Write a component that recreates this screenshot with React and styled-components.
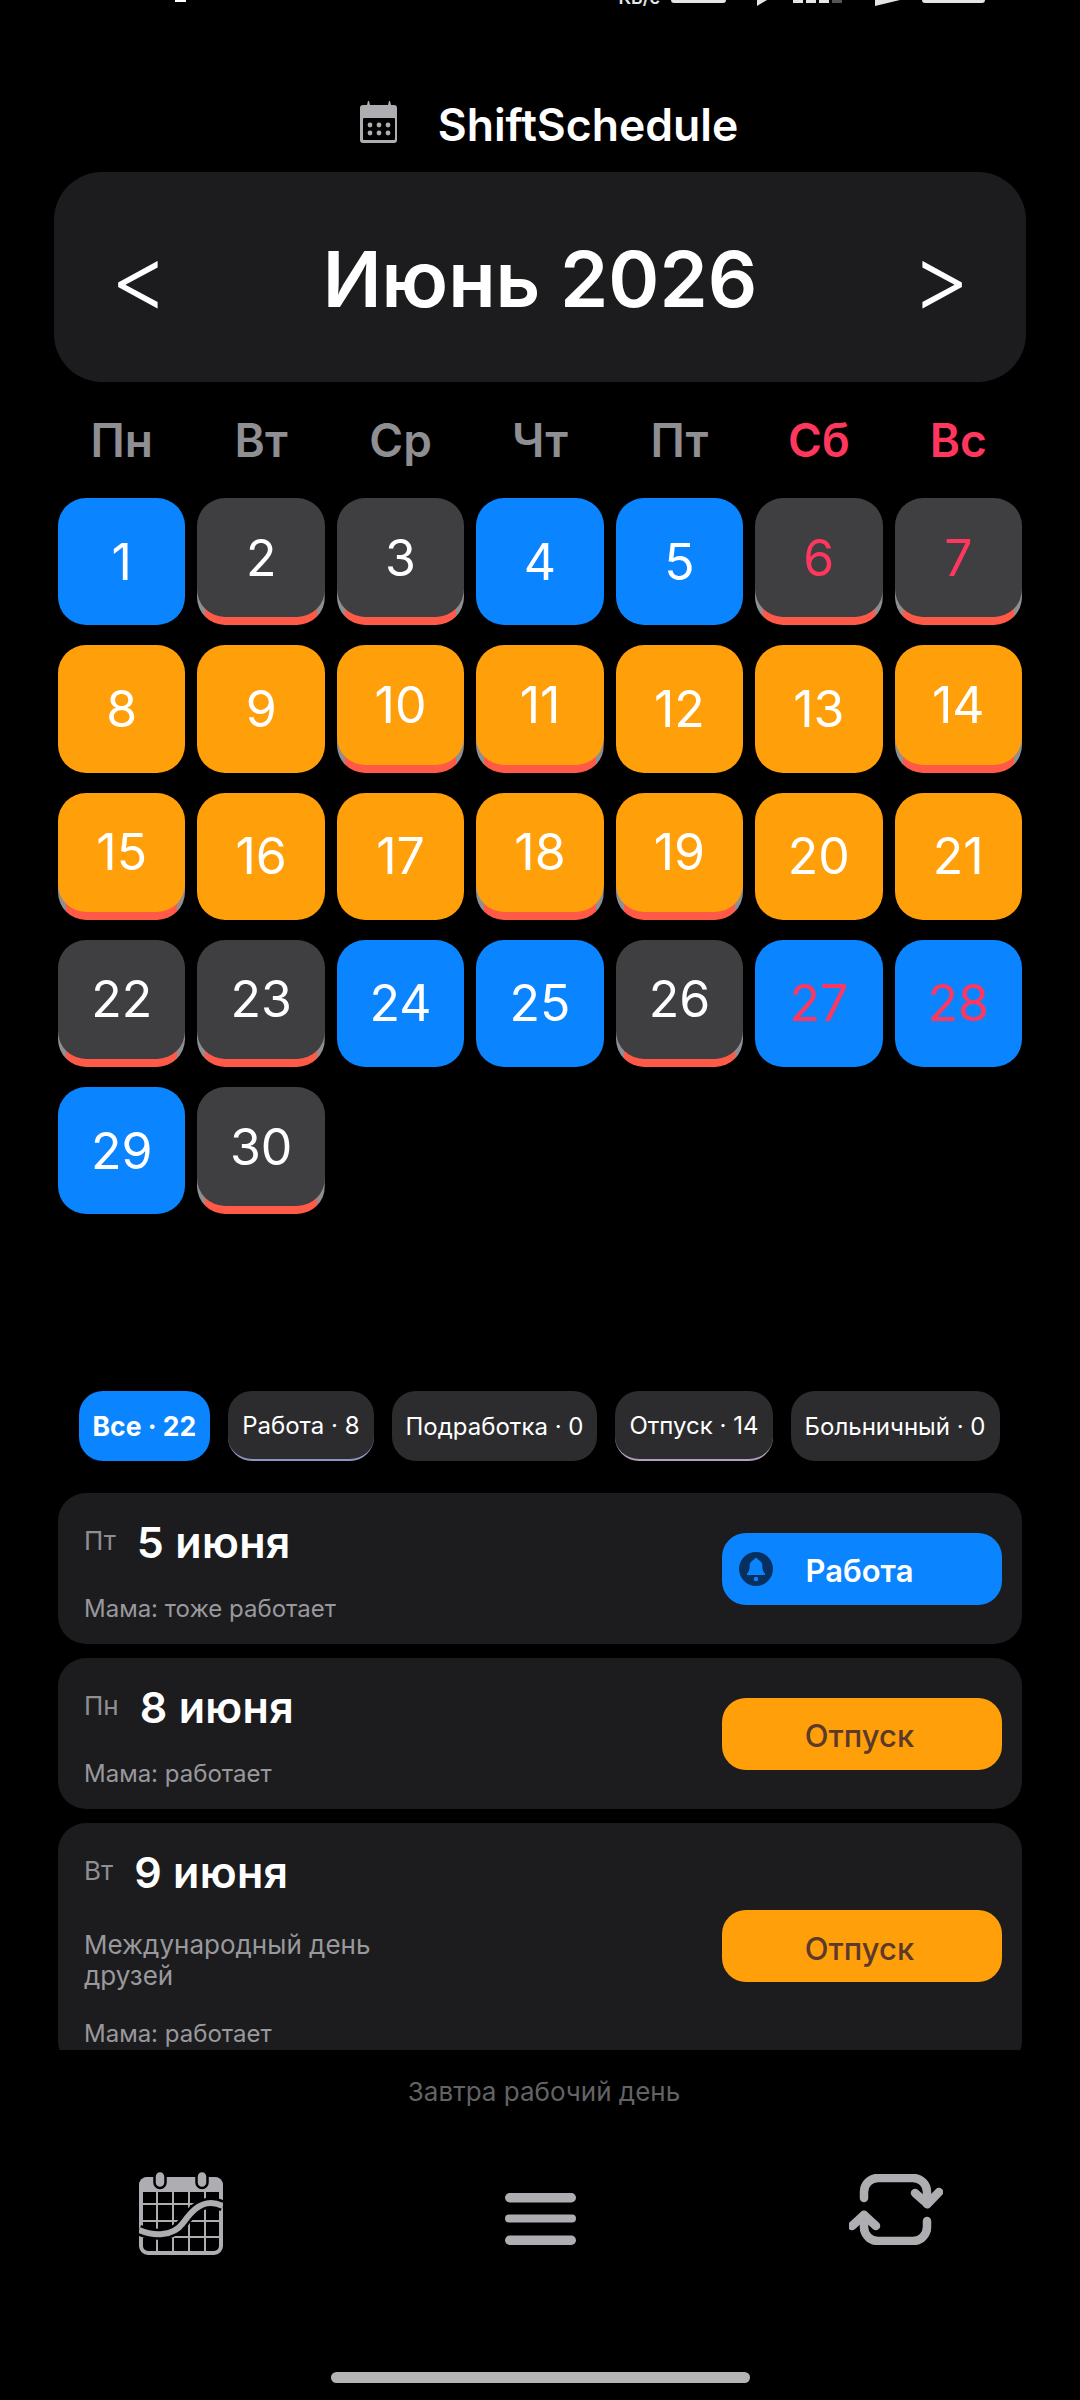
import styled, { createGlobalStyle } from "styled-components";

const GlobalStyle = createGlobalStyle`
  html, body {
    margin: 0;
    padding: 0;
    background: #000;
  }
  * {
    box-sizing: border-box;
  }
`;

const BLUE = "#0a84ff";
const ORANGE = "#ff9f0a";
const DARK = "#3f3e40";
const GRAY = "#aeaeb2";
const PINK = "#ff375f";

// w = работа, o = отпуск, d = выходной; второй элемент - полоска снизу, третий - красная цифра
const days = [
  ["w"], ["d", 1], ["d", 1], ["w"], ["w"], ["d", 1, 1], ["d", 1, 1],
  ["o"], ["o"], ["o", 1], ["o", 1], ["o"], ["o"], ["o", 1],
  ["o", 1], ["o"], ["o"], ["o", 1], ["o", 1], ["o"], ["o"],
  ["d", 1], ["d", 1], ["w"], ["w"], ["d", 1], ["w", 0, 1], ["w", 0, 1],
  ["w"], ["d", 1],
];

const faceColors = { w: BLUE, o: ORANGE, d: DARK };

const weekNames = ["Пн", "Вт", "Ср", "Чт", "Пт", "Сб", "Вс"];

const filters = [
  { label: "Все · 22", active: true },
  { label: "Работа · 8", line: "#8f92c4" },
  { label: "Подработка · 0" },
  { label: "Отпуск · 14", line: "#b39ebd" },
  { label: "Больничный · 0" },
];

export default function App() {
  return (
    <Page>
      <GlobalStyle />
      <StatusBar>
        <StatusDot />
        <StatusRight>
          <Speed>КБ/с</Speed>
          <StatusPill $w={55} $ml={11} />
          <StatusTip $w={10} $ml={31} />
          <Signal>
            <SignalBar $on />
            <SignalBar $on />
            <SignalBar $on />
            <SignalBar />
          </Signal>
          <StatusTip $w={25} $ml={33} />
          <StatusPill $w={63} $ml={22} />
        </StatusRight>
      </StatusBar>

      <TitleRow>
        <svg width="38" height="42" viewBox="0 0 38 42">
          <path d="M8 0h1l1 4h18l1-4h1l1 4h3a3 3 0 0 1 3 3v32a3 3 0 0 1-3 3H3a3 3 0 0 1-3-3V7a3 3 0 0 1 3-3h4z" fill={GRAY} />
          <rect x="3" y="17" width="32" height="22" rx="1" fill="#000" />
          {[10, 19, 28].map(x => (
            <g key={x} fill={GRAY}>
              <circle cx={x} cy="24" r="2.4" />
              <circle cx={x} cy="32" r="2.4" />
            </g>
          ))}
        </svg>
        <AppName>ShiftSchedule</AppName>
      </TitleRow>

      <MonthCard>
        <MonthArrow>&lt;</MonthArrow>
        <MonthName>Июнь 2026</MonthName>
        <MonthArrow>&gt;</MonthArrow>
      </MonthCard>

      <WeekRow>
        {weekNames.map((name, i) => (
          <WeekName key={name} $weekend={i > 4}>{name}</WeekName>
        ))}
      </WeekRow>

      <CalendarGrid>
        {days.map(([type, marked, red], i) => (
          <DayCell key={i} $marked={marked}>
            <DayFace $color={faceColors[type]} $marked={marked} $red={red}>
              {i + 1}
            </DayFace>
          </DayCell>
        ))}
      </CalendarGrid>

      <FilterRow>
        {filters.map(f => (
          <FilterChip key={f.label} $active={f.active} $line={f.line}>{f.label}</FilterChip>
        ))}
      </FilterRow>

      <ShiftList>
        <ShiftCard>
          <ShiftInfo>
            <DateLine>
              <WeekDay>Пт</WeekDay>
              <DateText>5 июня</DateText>
            </DateLine>
            <Note>Мама: тоже работает</Note>
          </ShiftInfo>
          <ShiftButton $work>
            <BellBadge>
              <svg width="34" height="34" viewBox="0 0 34 34">
                <circle cx="17" cy="17" r="17" fill="#08305f" />
                <path d="M17 6c1.2 0 2 .8 2 1.8 3 .9 4.400 3.500 4.400 6.700 0 3.500.8 5.200 2.600 7v1.500H8v-1.500c1.800-1.800 2.600-3.500 2.600-7 0-3.200 1.400-5.800 4.400-6.700C15 6.800 15.800 6 17 6z" fill={BLUE} />
                <circle cx="17" cy="27" r="2.200" fill={BLUE} />
              </svg>
            </BellBadge>
            Работа
          </ShiftButton>
        </ShiftCard>

        <ShiftCard>
          <ShiftInfo>
            <DateLine>
              <WeekDay>Пн</WeekDay>
              <DateText>8 июня</DateText>
            </DateLine>
            <Note>Мама: работает</Note>
          </ShiftInfo>
          <ShiftButton>Отпуск</ShiftButton>
        </ShiftCard>

        <ShiftCard $tall>
          <ShiftInfo>
            <DateLine>
              <WeekDay>Вт</WeekDay>
              <DateText>9 июня</DateText>
            </DateLine>
            <Holiday>Международный день<br />друзей</Holiday>
            <Note>Мама: работает</Note>
          </ShiftInfo>
          <ShiftButton>Отпуск</ShiftButton>
        </ShiftCard>
      </ShiftList>

      <Hint>Завтра рабочий день</Hint>

      <BottomNav>
        <NavIcon>
          <svg width="84" height="84" viewBox="0 0 84 84">
            <rect x="2" y="8" width="80" height="74" rx="7" fill="none" stroke={GRAY} strokeWidth="4" />
            <path d="M8 6h68a8 8 0 0 1 8 8v7H0v-7a8 8 0 0 1 8-8z" fill={GRAY} />
            <g stroke={GRAY} strokeWidth="2">
              {[18, 34, 50, 66].map(x => <path key={x} d={`M${x} 21V82`} />)}
              {[33, 50, 66].map(y => <path key={y} d={`M2 ${y}H82`} />)}
            </g>
            <g fill={GRAY} stroke="#000" strokeWidth="2.500">
              <rect x="15.500" y="0" width="11" height="17" rx="5.500" />
              <rect x="57.500" y="0" width="11" height="17" rx="5.500" />
            </g>
            <path d="M0 59C14 65 34 66 44 52C52 41 60 32 72 32C76 32 80 33 84 35" fill="none" stroke="#000" strokeWidth="11" />
            <path d="M0 59C14 65 34 66 44 52C52 41 60 32 72 32C76 32 80 33 84 35" fill="none" stroke={GRAY} strokeWidth="6" />
          </svg>
        </NavIcon>

        <NavIcon $top={22} $left={9}>
          <svg width="71" height="52" viewBox="0 0 71 52">
            <rect x="0" y="0" width="71" height="9.500" rx="4.700" fill={GRAY} />
            <rect x="0" y="21.500" width="71" height="8" rx="4" fill={GRAY} />
            <rect x="0" y="42.500" width="71" height="9.500" rx="4.700" fill={GRAY} />
          </svg>
        </NavIcon>

        <NavIcon $top={3}>
          <svg width="94" height="71" viewBox="0 0 94 71">
            <g fill="none" stroke={GRAY} strokeWidth="8.500" strokeLinecap="round" strokeLinejoin="round">
              <path d="M15 24V18A14 14 0 0 1 29 4H64A14 14 0 0 1 78 18V30" />
              <path d="M66 19L78.500 30L90 18" />
              <path d="M78 47V53A14 14 0 0 1 64 67H29A14 14 0 0 1 15 53V41" />
              <path d="M3 52L15 41L27 52" />
            </g>
          </svg>
        </NavIcon>
      </BottomNav>

      <HomeBar />
    </Page>
  );
}

const Page = styled.div`
  width: 1080px;
  height: 2400px;
  background: #000;
  color: #fff;
  font-family: Inter, "Noto Sans", sans-serif;
  display: flex;
  flex-direction: column;
  overflow: hidden;
`;

const StatusBar = styled.div`
  height: 6px;
  display: flex;
  justify-content: space-between;
  align-items: flex-start;
  padding: 0 95px 0 175px;
  overflow: hidden;
`;

const StatusDot = styled.div`
  width: 11px;
  height: 2px;
  background: #fff;
`;

const StatusRight = styled.div`
  display: flex;
  align-items: flex-start;
`;

const Speed = styled.span`
  font-size: 18px;
  line-height: 22px;
  font-weight: 600;
  color: #e5e5e5;
  margin-top: -13px;
`;

const StatusPill = styled.div`
  width: ${p => p.$w}px;
  height: 3px;
  margin-left: ${p => p.$ml}px;
  background: #e5e5e5;
  border-radius: 0 0 4px 4px;
`;

const StatusTip = styled.div`
  width: ${p => p.$w}px;
  height: 6px;
  margin-left: ${p => p.$ml}px;
  background: #e5e5e5;
  clip-path: polygon(0 0, 100% 0, 0 100%);
`;

const Signal = styled.div`
  display: flex;
  gap: 3px;
  margin-left: 26px;
`;

const SignalBar = styled.div`
  width: 10px;
  height: 3px;
  background: ${p => (p.$on ? "#e5e5e5" : "#555")};
`;

const TitleRow = styled.div`
  height: 42px;
  margin-top: 95px;
  display: flex;
  align-items: center;
  justify-content: center;
  gap: 40px;
  padding-left: 18px;
`;

const AppName = styled.h1`
  margin: 5px 0 0;
  font-size: 44.500px;
  line-height: 48px;
  font-weight: 600;
`;

const MonthCard = styled.div`
  margin: 29px 54px 0;
  height: 210px;
  background: #1c1c1e;
  border-radius: 48px;
  display: flex;
  align-items: center;
  justify-content: space-between;
  padding: 0 56px;
`;

const MonthArrow = styled.span`
  font-size: 90px;
  line-height: 90px;
  font-weight: 300;
  margin-top: 2px;
`;

const MonthName = styled.h2`
  margin: 3px 0 0;
  font-size: 77.500px;
  line-height: 90px;
  font-weight: 600;
`;

const WeekRow = styled.div`
  margin: 0 58px;
  height: 116px;
  display: grid;
  grid-template-columns: repeat(7, 1fr);
  gap: 12px;
  align-items: center;
`;

const WeekName = styled.div`
  text-align: center;
  font-size: 46px;
  line-height: 54px;
  font-weight: 600;
  color: ${p => (p.$weekend ? PINK : "#8e8e93")};
`;

const CalendarGrid = styled.div`
  margin: 0 58px;
  display: grid;
  grid-template-columns: repeat(7, 1fr);
  grid-auto-rows: 127.250px;
  column-gap: 12px;
  row-gap: 20px;
`;

const DayCell = styled.div`
  border-radius: 28px;
  background: ${p =>
    p.$marked
      ? "linear-gradient(to right, #8e8e93 8px, #ff5a47 8px, #ff5a47 calc(100% - 8px), #8e8e93 calc(100% - 8px)) bottom / 100% 40px no-repeat"
      : "none"};
`;

const DayFace = styled.div`
  height: ${p => (p.$marked ? "calc(100% - 8px)" : "100%")};
  border-radius: 28px;
  background: ${p => p.$color};
  color: ${p => (p.$red ? PINK : "#fff")};
  display: flex;
  align-items: center;
  justify-content: center;
  font-size: 50px;
  font-weight: 400;
`;

const FilterRow = styled.div`
  margin-top: 176.750px;
  display: flex;
  justify-content: center;
  gap: 18px;
  padding-right: 2px;
`;

const FilterChip = styled.div`
  height: 70px;
  padding: 0 14px;
  border-radius: 24px;
  display: flex;
  align-items: center;
  font-size: ${p => (p.$active ? 26.500 : 24)}px;
  font-weight: ${p => (p.$active ? 700 : 400)};
  background: ${p => (p.$active ? BLUE : "#2c2c2e")};
  border-bottom: ${p => (p.$line ? `2px solid ${p.$line}` : "none")};
`;

const ShiftList = styled.div`
  margin: 32px 58px 0;
  height: 557px;
  overflow: hidden;
  display: flex;
  flex-direction: column;
  gap: 14px;
`;

const ShiftCard = styled.div`
  flex: none;
  height: ${p => (p.$tall ? 246 : 151)}px;
  background: #1c1c1e;
  border-radius: 28px;
  display: flex;
  align-items: center;
  justify-content: space-between;
  padding: 0 20px 0 26px;
`;

const ShiftInfo = styled.div`
  align-self: stretch;
  padding-top: 25px;
  display: flex;
  flex-direction: column;
`;

const DateLine = styled.div`
  display: flex;
  align-items: flex-start;
  gap: 21px;
  height: 48px;
`;

const WeekDay = styled.span`
  font-size: 26px;
  line-height: 36px;
  margin-top: 5px;
  color: #8e8e93;
`;

const DateText = styled.span`
  font-size: 43px;
  line-height: 48px;
  font-weight: 600;
  letter-spacing: 0.3px;
`;

const Holiday = styled.div`
  margin-top: 33px;
  font-size: 26px;
  line-height: 31px;
  color: #98989d;
`;

const Note = styled.div`
  margin-top: 25px;
  font-size: 24px;
  line-height: 36px;
  color: #98989d;
`;

const ShiftButton = styled.div`
  position: relative;
  width: 280px;
  height: 72px;
  padding: 4px 5px 0 0;
  border-radius: 24px;
  background: ${p => (p.$work ? BLUE : ORANGE)};
  color: ${p => (p.$work ? "#fff" : "#5c3a2a")};
  display: flex;
  align-items: center;
  justify-content: center;
  font-size: 31px;
  font-weight: ${p => (p.$work ? 600 : 500)};
`;

const BellBadge = styled.span`
  position: absolute;
  left: 17px;
  top: 19px;
  width: 34px;
  height: 34px;
  line-height: 0;
`;

const Hint = styled.div`
  margin-top: 24px;
  padding-left: 8px;
  text-align: center;
  font-size: 26px;
  line-height: 36px;
  color: #636366;
`;

const BottomNav = styled.div`
  margin-top: 61px;
  height: 84px;
  display: flex;
  align-items: flex-start;
  justify-content: space-between;
  padding: 0 137px 0 139px;
`;

const NavIcon = styled.span`
  line-height: 0;
  margin-top: ${p => p.$top || 0}px;
  margin-left: ${p => p.$left || 0}px;
`;

const HomeBar = styled.div`
  margin: 117px auto 0;
  width: 419px;
  height: 11px;
  border-radius: 6px;
  background: #b4b4b4;
`;
